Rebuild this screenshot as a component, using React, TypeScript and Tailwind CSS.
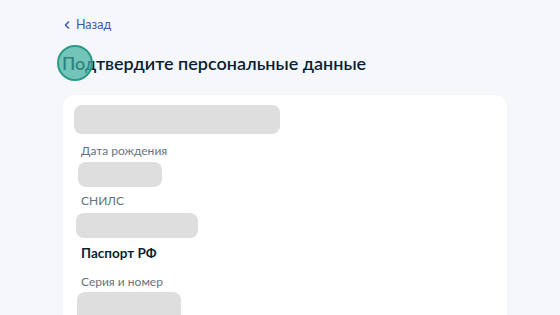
export default function App() {
  return (
    <div className="relative h-[315px] w-[560px] overflow-hidden bg-[#f5f7fb] font-['Lato',sans-serif]">
      <div className="pl-[62px] pt-[17px]">
        <a className="flex items-center gap-[5px] text-[12.5px] leading-[16px] text-[#3a5ba9]">
          <svg width="8" height="8" viewBox="0 0 8 8" className="ml-[1px]">
            <path d="M5.5 1 L2.5 4 L5.5 7" fill="none" stroke="#3a5ba9" strokeWidth="1.6" strokeLinecap="round" strokeLinejoin="round" />
          </svg>
          <span>Назад</span>
        </a>
        <h1 className="mt-[18px] text-[18px] font-semibold leading-[24px] text-[#0b1f33]">
          Подтвердите персональные данные
        </h1>
      </div>

      <div className="ml-[63px] mt-[20px] h-[240px] w-[444px] rounded-[12px] bg-white px-[11px] pt-[10px] shadow-[0_1px_4px_rgba(20,40,80,0.04)]">
        <div className="h-[29px] w-[206px] rounded-[8px] bg-[#dedede]" />
        <div className="ml-[7px] mt-[9px] text-[12px] leading-[16px] text-[#66727f]">Дата рождения</div>
        <div className="ml-[4px] mt-[3px] h-[25px] w-[84px] rounded-[8px] bg-[#dedede]" />
        <div className="ml-[7px] mt-[6px] text-[12px] leading-[16px] text-[#66727f]">СНИЛС</div>
        <div className="ml-[2px] mt-[4px] h-[25px] w-[122px] rounded-[8px] bg-[#dedede]" />
        <div className="ml-[7px] mt-[6px] text-[13.5px] font-bold leading-[18px] text-[#0b1f33]">Паспорт РФ</div>
        <div className="ml-[7px] mt-[12px] text-[12px] leading-[16px] text-[#66727f]">Серия и номер</div>
        <div className="ml-[3px] mt-[2px] h-[30px] w-[104px] rounded-[8px] bg-[#dedede]" />
      </div>

      <div className="absolute left-[57px] top-[45px] h-[36px] w-[36px] rounded-full border-2 border-[#2a9a88] bg-[#3fae9c]/70" />
    </div>
  );
}
